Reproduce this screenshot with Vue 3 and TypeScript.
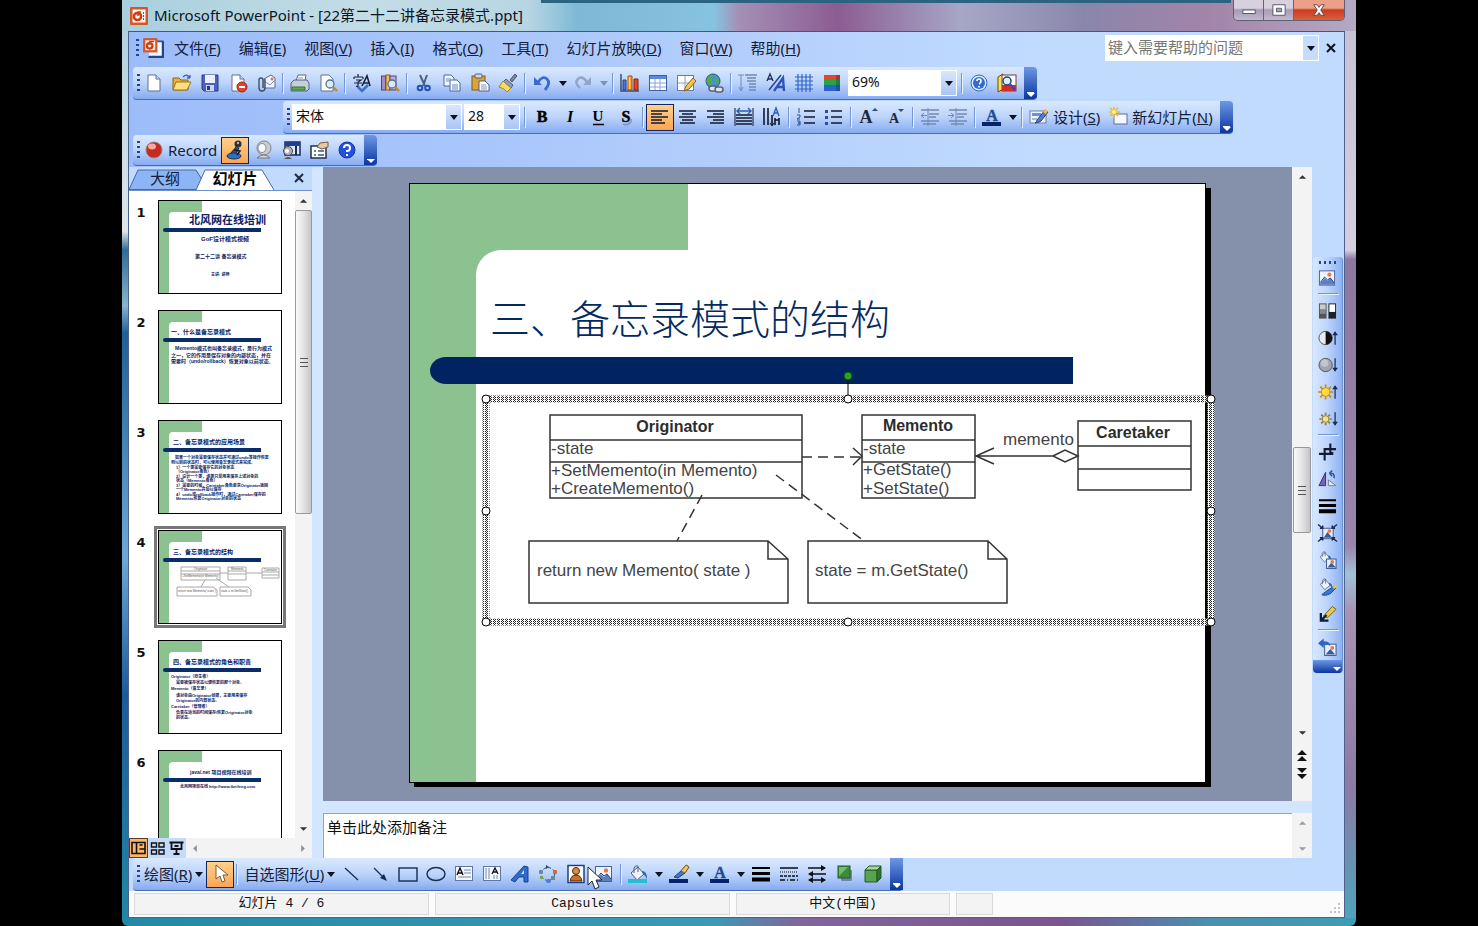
<script setup lang="ts">
import { h, ref, type FunctionalComponent } from 'vue'

type Tool =
  | { kind: 'button'; icon?: string; label: string; text?: string; key?: string; active?: boolean; pointer?: boolean; wide?: boolean; menu?: boolean }
  | { kind: 'menu'; label: string; muted?: boolean }
  | { kind: 'sep' }
  | { kind: 'combo'; label: string; value: string; size: string }

const AR = (x: number, y: number, up: boolean) =>
  `<path d="M${x} ${y}V${y + 13}" stroke="#182c50" stroke-width="1.3"/><path d="${up ? `M${x - 3} ${y + 3}L${x} ${y - 1}L${x + 3} ${y + 3}` : `M${x - 3} ${y + 10}L${x} ${y + 14}L${x + 3} ${y + 10}`}z" fill="#182c50"/>`
const PIC = '<rect x="1.5" y="2.5" width="16" height="15" fill="#eef4ff" stroke="#44639e"/><path d="M2 16l5-6 3 3 3-3 4 5v2H2z" fill="#5b7fc0"/><path d="M2 15l5-6 3 3 3-2 4 5" fill="none" stroke="#23407c"/><circle cx="12" cy="6.5" r="2.2" fill="#ee7a42"/>'
const PAGE = '<path d="M4 2h8l4 4v12H4z" fill="#fff" stroke="#5d7196"/><path d="M12 2v4h4" fill="#cfdcf2" stroke="#5d7196"/>'
const LENS = '<circle cx="12" cy="11" r="4" fill="#d6edff" stroke="#5c6f8a" stroke-width="1.3"/><path d="M15 14l4 4" stroke="#c68a1a" stroke-width="2.4"/>'
const rows = (a: number[][], c = '#10182c', w = 1.6) => a.map(([x1, x2, y]) => `<path d="M${x1} ${y}H${x2}" stroke="${c}" stroke-width="${w}"/>`).join('')
const rays = (r1: number, r2: number, c: string) =>
  Array.from({ length: 8 }, (_, i) => {
    const a = (i * Math.PI) / 4
    return `<path d="M${8 + r1 * Math.cos(a)} ${10 + r1 * Math.sin(a)}L${8 + r2 * Math.cos(a)} ${10 + r2 * Math.sin(a)}" stroke="${c}" stroke-width="1.8"/>`
  }).join('')
const BUCKET = '<path d="M3 9l7-6 6 7-7 6z" fill="#eef2fa" stroke="#50617f"/><path d="M6 9V4q1-3 4-2v6" fill="none" stroke="#50617f"/><path d="M14 7q5 0 5 8-2-4-4-5z" fill="#2e62b4"/>'

const icons: Record<string, string> = {
  ppt: '<rect x="1" y="1" width="18" height="18" rx="1" fill="#d4572a"/><rect x="3.5" y="3.5" width="13" height="13" fill="#fff4ec"/><circle cx="8.5" cy="10.5" r="3.6" fill="none" stroke="#cc3d16" stroke-width="2.5"/><path d="M9 10V6h3" stroke="#cc3d16" stroke-width="1.5" fill="none"/><path d="M14.5 6v9" stroke="#cc3d16" stroke-dasharray="2 1"/>',
  doc: '<path d="M8 4h11v14H6" fill="#f5f9ff" stroke="#315b9b" stroke-width="1.5"/><path d="M19 4v14H6" stroke="#234684" stroke-width="2" fill="none"/><rect x="1" y="1" width="13" height="13" fill="#d4572a"/><rect x="3" y="3" width="9" height="9" fill="#ffe9da"/><circle cx="7" cy="8" r="2.5" fill="none" stroke="#cc3d16" stroke-width="2"/><path d="M7 7V4h4" stroke="#cc3d16" fill="none"/>',
  new: PAGE,
  open: '<path d="M1 5h6l2 2h7v10H1z" fill="#e7b13c" stroke="#8d6915"/><path d="M4 9h15l-4 8H1z" fill="#ffdf82" stroke="#9a741c"/><path d="M11 4q4-4 7 1m0 0V2m0 3h-3" fill="none" stroke="#3e65a7" stroke-width="1.3"/>',
  save: '<path d="M2 2h16v16H4l-2-2z" fill="#4e5fc2" stroke="#2a3884"/><rect x="5" y="2" width="10" height="8" fill="#e9effc"/><rect x="6" y="12" width="8" height="6" fill="#cdd4ee"/><rect x="7" y="13" width="3" height="4" fill="#2a3884"/>',
  perm: PAGE + '<circle cx="14" cy="14" r="5" fill="#de452b" stroke="#a4240f"/><path d="M11 14h6" stroke="#fff" stroke-width="2"/>',
  mail: '<path d="M8 6l7-4 4 3v10H8z" fill="#f0f5ff" stroke="#576c97"/><path d="M8 8l6 4 5-5" fill="none" stroke="#7d91bb"/><circle cx="16" cy="6" r="1.5" fill="#e0774f"/><path d="M9 6v9q0 3-3 3t-3-3V7q0-2 2-2t2 2v8" fill="none" stroke="#444f66" stroke-width="1.4"/>',
  print: '<path d="M6 8l2-6h8l-1 6z" fill="#fff" stroke="#596b8d"/><path d="M1 10l3-3h13l2 3v6l-2 2H1z" fill="#c4cedd" stroke="#53627d"/><path d="M2 14h13v3H2z" fill="#5fae50" stroke="#357931"/><path d="M8 5h5" stroke="#8899b7"/>',
  preview: '<path d="M3 2h8l4 4v12H3z" fill="#fff" stroke="#5d7196"/>' + LENS,
  spell: '<path d="M2 4h9M6 1v3M2 4v2m9-2v2M4 7h5l-3 2v5l-2-1M2 10h8" fill="none" stroke="#17233c" stroke-width="1.2"/><path d="M10 13l5-10 3 10M12 10h5" fill="none" stroke="#17233c" stroke-width="1.6"/><path d="M6 14l4 4 6-6" fill="none" stroke="#3273d2" stroke-width="2.6"/>',
  research: '<rect x="1.5" y="3" width="4" height="14" fill="#a58bc8" stroke="#594176"/><rect x="6" y="2" width="4" height="15" fill="#edc15b" stroke="#8b6418"/><rect x="10" y="3" width="6" height="14" fill="#b8b2da" stroke="#594176"/>' + LENS,
  cut: '<path d="M6 2l5 11M13 2L9 13" stroke="#4b6288" stroke-width="2"/><circle cx="6" cy="15" r="2.3" fill="none" stroke="#2450b6" stroke-width="2"/><circle cx="13.5" cy="15" r="2.3" fill="none" stroke="#2450b6" stroke-width="2"/>',
  copy: '<path d="M2 2h7l3 3v8H2z" fill="#f4f8ff" stroke="#4a66a2"/><path d="M8 7h7l3 3v8H8z" fill="#f4f8ff" stroke="#4a66a2"/><path d="M4 6h5M4 8h4m2 4h6m-6 2h6m-6 2h6" stroke="#688ac9"/>',
  paste: '<rect x="2" y="3" width="13" height="14" fill="#dca438" stroke="#84590e"/><rect x="5" y="1" width="7" height="4" rx="1" fill="#d1d8e2" stroke="#555f73"/><path d="M9 8h6l4 4v6H9z" fill="#fff" stroke="#4d5f86"/><path d="M11 12h5m-5 2h6m-6 2h6" stroke="#8195be"/>',
  painter: '<path d="M12 7l5-6 2 2-5 6z" fill="#7b86a5" stroke="#4b546c"/><path d="M8 6l7 6-2 3-8-6z" fill="#8e9cba" stroke="#54607e"/><path d="M5 8l8 7-4 4q-3-4-8-5z" fill="#f2dc65" stroke="#a4861b"/>',
  undo: '<path d="M6 9q5-7 9-3t-2 11" fill="none" stroke="#3a69cf" stroke-width="2.8"/><path d="M2 4v8h8z" fill="#3a69cf"/>',
  redo: '<path d="M14 9q-5-7-9-3t2 9" fill="none" stroke="#93a6c8" stroke-width="2.5"/><path d="M18 4v8h-8z" fill="#93a6c8"/>',
  chart: '<path d="M1 1v17h18" stroke="#3b4d70" fill="none" stroke-width="1.5"/><path d="M3 7h3v10H3z" fill="#5279d0" stroke="#203f88"/><path d="M8 3h4v14H8z" fill="#f29a35" stroke="#ad4712"/><path d="M14 6h4v11h-4z" fill="#d9482b" stroke="#862310"/><path d="M9.5 4v12" stroke="#ffe052" stroke-width="1.5"/>',
  table: '<rect x="1.5" y="2.5" width="17" height="15" fill="#fff" stroke="#3b60a8"/><path d="M2 3h16v3H2z" fill="#5f89d8"/><path d="M2 10h16M2 14h16M7 6v11m5-11v11" stroke="#8aa6d5"/>',
  tableDraw: '<rect x="1.5" y="2.5" width="16" height="15" fill="#fff" stroke="#6c7c99"/><path d="M2 10h15M9 3v14" stroke="#8aa0c4"/><path d="M8 18l2-5 7-8 3 3-7 8z" fill="#f4c44f" stroke="#8b601c"/>',
  link: '<circle cx="9" cy="8" r="7" fill="#4a8fdc" stroke="#245a7c"/><path d="M4 4q4-4 6 0l-3 2 2 3-3 4-4-5zM12 5l3 1v5l-3-2z" fill="#55a94b"/><rect x="5" y="13" width="8" height="5" rx="2.5" fill="#dfe4ec" stroke="#59647a" stroke-width="1.5"/><rect x="11" y="14" width="8" height="5" rx="2.5" fill="#dfe4ec" stroke="#59647a" stroke-width="1.5"/>',
  expand: rows([[7, 19, 2], [9, 18, 5], [9, 18, 8], [11, 18, 11], [11, 18, 14], [11, 18, 17]], '#7388b4', 1.3) + '<path d="M3 2v15M0 2h6M1 14l2 4 2-4" stroke="#7388b4" fill="none"/>',
  format: '<path d="M1 8l3-7 3 7M2 6h4" stroke="#1f3159" stroke-width="1.3" fill="none"/><path d="M3 17L15 2" stroke="#27448c" stroke-width="1.5"/><path d="M8 18l9-13 1 13M11 14h7" stroke="#2b54b4" stroke-width="2.4" fill="none"/>',
  grid: '<path d="M4 1v18M8 1v18M12 1v18M16 1v18M1 4h18M1 8h18M1 12h18M1 16h18" stroke="#2e63cc" stroke-width="1.2"/>',
  color: '<rect x="2" y="2" width="16" height="6" fill="#e04a2b"/><rect x="2" y="7" width="16" height="6" fill="#25a54a"/><rect x="2" y="12" width="16" height="6" fill="#2763cf"/><path d="M14 2h4v16h-4z" fill="#123" opacity=".3"/>',
  help: '<circle cx="10" cy="10" r="8" fill="#dceaff" stroke="#3869bd"/><circle cx="10" cy="10" r="6" fill="#316dce"/><path d="M8 8q0-2 2-2t2 2-2 3m0 2v1.5" fill="none" stroke="#fff" stroke-width="1.7"/>',
  helpDeep: '<circle cx="10" cy="10" r="8" fill="#2450e0" stroke="#18349d"/><path d="M7 8q0-3 3-3t3 3-3 3v1m0 2v2" fill="none" stroke="#fff" stroke-width="2"/>',
  lookup: '<path d="M1 4l5-3v15l-5 3z" fill="#ffe04a" stroke="#6a4c0d"/><rect x="5" y="2" width="14" height="16" fill="#fbfbff" stroke="#7f3f2d"/><path d="M5 12h14v6H5z" fill="#d92b20"/><circle cx="10" cy="8" r="4" fill="#d8f0ff" stroke="#26407c" stroke-width="1.5"/><path d="M13 11l5 6" stroke="#3d3fc0" stroke-width="2"/>',
  bold: '<text x="10" y="15" text-anchor="middle" font-family="Liberation Serif, serif" font-size="16" font-weight="700" fill="#000" stroke="#000" stroke-width=".5">B</text>',
  italic: '<text x="10" y="15" text-anchor="middle" font-family="Liberation Serif, serif" font-size="16" font-weight="700" font-style="italic" fill="#000">I</text>',
  under: '<text x="10" y="14" text-anchor="middle" font-family="Liberation Serif, serif" font-size="15" font-weight="700" fill="#000">U</text><path d="M5 17.5h11" stroke="#000" stroke-width="1.3"/>',
  shadow: '<path d="M7 17q5 2 8-2v-3" fill="none" stroke="#7b93bd" stroke-width="1.4"/><text x="10" y="15" text-anchor="middle" font-family="Liberation Serif, serif" font-size="16" font-weight="700" fill="#000" stroke="#000" stroke-width=".4">S</text>',
  left: rows([[1, 18, 4], [1, 12, 7], [1, 18, 10], [1, 12, 13], [1, 15, 16]]),
  center: rows([[1, 18, 4], [4, 15, 7], [1, 18, 10], [4, 15, 13], [2, 17, 16]]),
  right: rows([[1, 18, 4], [7, 18, 7], [1, 18, 10], [7, 18, 13], [4, 18, 16]]),
  distribute: rows([[2, 18, 8], [2, 18, 11], [2, 18, 14], [2, 18, 17]]) + '<path d="M1 1v18M19 1v18" stroke="#10182c"/><path d="M3 4h14M6 1L3 4l3 3M14 1l3 3-3 3" fill="none" stroke="#2f5cb6" stroke-width="1.4"/>',
  vertical: '<path d="M2 1v17M6 1v17M10 8v10M13 11v7M17 11v7M13 13h4" stroke="#10182c" stroke-width="1.6"/><path d="M11 9l3-8 3 8M12 6h4" stroke="#2f5cb6" stroke-width="1.4" fill="none"/><path d="M8 16l2 3 2-3" stroke="#10182c" fill="none"/>',
  numbers: rows([[8, 19, 4], [8, 19, 10], [8, 19, 16]]) + '<path d="M3 1v5M1 8h3v2l-3 2h3M1 14h3v2H2h2v2H1" stroke="#2b4f9c" fill="none"/>',
  bullets: rows([[7, 18, 4], [7, 18, 10], [7, 18, 16]]) + '<rect x="1" y="3" width="3" height="3" fill="#2b4f9c"/><rect x="1" y="9" width="3" height="3" fill="#2b4f9c"/><rect x="1" y="15" width="3" height="3" fill="#2b4f9c"/>',
  grow: '<text x="8" y="16" text-anchor="middle" font-family="Liberation Serif, serif" font-size="18" font-weight="700" fill="#1c2a3c">A</text><path d="M14 4l3-3 3 3z" fill="#274c96"/>',
  shrink: '<text x="8" y="16" text-anchor="middle" font-family="Liberation Serif, serif" font-size="14" font-weight="700" fill="#1c2a3c">A</text><path d="M12 2h6l-3 3z" fill="#274c96"/>',
  outdent: rows([[1, 19, 3], [9, 19, 7], [9, 16, 10], [1, 19, 14], [3, 16, 17]], '#7388b4', 1.4) + '<path d="M7 8.5H1M4 6L1 8.5 4 11M8 1v18" fill="none" stroke="#7388b4"/>',
  indent: rows([[1, 19, 3], [9, 19, 7], [9, 16, 10], [1, 19, 14], [3, 16, 17]], '#7388b4', 1.4) + '<path d="M0 8.5h6M3 6l3 2.5L3 11M8 1v18" fill="none" stroke="#7388b4"/>',
  fontColor: '<rect x="0" y="15" width="19" height="4" fill="#06246a"/><text x="10" y="14" text-anchor="middle" font-family="Liberation Serif, serif" font-size="16" font-weight="700" fill="#244a94" stroke="#244a94" stroke-width=".4">A</text>',
  design: '<rect x="1" y="4" width="16" height="12" fill="#eef4ff" stroke="#6b7ea6"/><path d="M3 6h9v3H3z" fill="#6b93dd"/><path d="M3 12h5" stroke="#6b7ea6"/><path d="M8 13l8-10 3 2-7 9q-3 2-6 2 2-1 2-3z" fill="#547cc8" stroke="#26427b"/><path d="M14 5l2-3 3 2-2 3z" fill="#f0bc43"/>',
  newSlide: '<rect x="6" y="7" width="13" height="10" fill="#f5f9ff" stroke="#5a6f9b"/><path d="M6 0v11M1 5h11M2 1l8 8M10 1L2 9" stroke="#f1b92c" stroke-width="1.6"/><circle cx="6" cy="5" r="2" fill="#fff3a0"/>',
  record: '<circle cx="10" cy="10" r="8" fill="#c52b22" stroke="#9c837d"/><ellipse cx="8" cy="6.5" rx="4" ry="3" fill="#f7a99b"/>',
  mic: '<circle cx="13" cy="4" r="3.5" fill="#2a2f38"/><path d="M12 6L5 14l5 1 4-7" fill="#39506c" stroke="#111a2a"/><ellipse cx="9" cy="16" rx="7" ry="3" fill="#2e6fc4" stroke="#123462"/><path d="M9 10l6 1-3 4" stroke="#111a2a" fill="none" stroke-width="1.5"/><circle cx="13" cy="3" r="1.2" fill="#aeb9c8"/>',
  webcam: '<circle cx="11" cy="8" r="7" fill="#c9cdd0" stroke="#7e8387"/><ellipse cx="9" cy="8" rx="4" ry="4.5" fill="#f7f8f9" stroke="#888d91"/><path d="M4 18q7-6 13 0z" fill="#d9dcde" stroke="#777"/>',
  screen: '<rect x="4" y="2" width="15" height="13" fill="#dce9fb" stroke="#152a58" stroke-width="1.5"/><rect x="4" y="2" width="15" height="4" fill="#1e3f92"/><path d="M15 6v9" stroke="#152a58" stroke-width="2"/><circle cx="7" cy="11" r="4.5" fill="#aeb2b6" stroke="#444"/><circle cx="6" cy="11" r="2" fill="#fff"/><path d="M3 19q4-4 8 0z" fill="#555"/>',
  options: '<rect x="2" y="6" width="15" height="12" fill="#fff" stroke="#20304e" stroke-width="1.5"/><path d="M5 11h2m2 0h6M5 15h2m2 0h6" stroke="#31588f" stroke-width="1.5"/><path d="M8 7l3-4 8-1v5l-6 2z" fill="#e9c6a2" stroke="#7a583a"/>',
  pointer: '<path d="M6 1v14l4-3 2 6 3-1-2-6h5z" fill="#fff" stroke="#7a5a35"/>',
  line: '<path d="M3 4l13 12" stroke="#182c50" stroke-width="1.3"/>',
  arrow: '<path d="M4 4l11 11" stroke="#182c50" stroke-width="1.3"/><path d="M17 17l-7-3 4-4z" fill="#182c50"/>',
  rect: '<rect x="1" y="4" width="18" height="13" fill="none" stroke="#182c50" stroke-width="1.4"/>',
  oval: '<ellipse cx="10" cy="10" rx="9" ry="6.5" fill="none" stroke="#182c50" stroke-width="1.4"/>',
  textBox: '<rect x="1.5" y="2.5" width="17" height="14" fill="#f4f8ff" stroke="#62779f"/><path d="M3 11l3-7 3 7M4 9h4" stroke="#111" fill="none" stroke-width="1.4"/><path d="M10 6h7m-7 3h7M4 13h13" stroke="#7488ae"/>',
  textBoxV: '<rect x="1.5" y="2.5" width="17" height="14" fill="#f4f8ff" stroke="#62779f"/><path d="M10 10l3-6 3 6M11 8h4" stroke="#111" fill="none" stroke-width="1.3"/><path d="M4 4v11m3-11v11m5-4v4m3-4v4" stroke="#7488ae"/>',
  wordArt: '<path d="M1 16L14 2l4 1v15h-4v-5H9l-4 5z" fill="#2f6bcb" stroke="#184493"/><path d="M11 10l3-4v4z" fill="#cfe0fb"/>',
  diagram: '<circle cx="10" cy="10" r="6.5" fill="none" stroke="#31456b" stroke-dasharray="3 2"/><rect x="1" y="6" width="4" height="4" rx="1" fill="#6a86b8"/><rect x="15" y="6" width="4" height="4" rx="1" fill="#c06f4a"/><rect x="8" y="15" width="5" height="4" rx="2" fill="#4d7ed8"/><rect x="2" y="12" width="3" height="3" fill="#7aa551"/><rect x="13" y="12" width="4" height="4" fill="#75839c"/><path d="M8 1l3 2-3 2z" fill="#31456b"/>',
  clip: '<rect x="2" y="1.5" width="16" height="17" fill="#fff" stroke="#203e7c" stroke-width="1.5"/><circle cx="10" cy="7" r="3.5" fill="#e0893e" stroke="#4b2b10"/><path d="M4 17q1-6 6-6t6 6z" fill="#ce6d24" stroke="#4b2b10"/>',
  picture: PIC,
  fill: BUCKET + '<rect x="0" y="15" width="19" height="4" fill="#25bfd0"/>',
  pen: '<path d="M5 13l7-6 5-6 3 2-4 6-7 5z" fill="#4b72bd" stroke="#243f78"/><path d="M12 7l5-6 3 2-4 6z" fill="#efc663" stroke="#8c6a20"/><rect x="0" y="15" width="19" height="4" fill="#06246a"/>',
  weight: '<path d="M1 4h18" stroke="#000" stroke-width="2"/><path d="M1 9.5h18" stroke="#000" stroke-width="3"/><path d="M1 15.5h18" stroke="#000" stroke-width="4"/>',
  dash: rows([[1, 19, 4]]) + '<path d="M1 8h18" stroke="#111" stroke-dasharray="1 1"/><path d="M1 12h18" stroke="#111" stroke-width="1.5" stroke-dasharray="3 1"/><path d="M1 16h18" stroke="#111" stroke-width="1.5" stroke-dasharray="5 2 1 2"/>',
  arrows: '<path d="M1 4h17M2 10h17M2 16h16" stroke="#111" stroke-width="1.5"/><path d="M14 1l5 3-5 3zM6 7l-5 3 5 3zM6 13l-5 3 5 3zM14 13l5 3-5 3z" fill="#111"/>',
  shade: '<rect x="6" y="6" width="11" height="11" rx="1" fill="#7088a8"/><rect x="3" y="2" width="12" height="12" fill="#3f8b3c" stroke="#225a22"/><path d="M4 3h9L4 12z" fill="#77bb6d"/>',
  cube: '<path d="M2 6h12v12H2z" fill="#58a352" stroke="#225a22"/><path d="M2 6l4-4h12l-4 4z" fill="#a9d89f" stroke="#225a22"/><path d="M14 6l4-4v12l-4 4z" fill="#2f7030" stroke="#225a22"/>',
  gray: '<rect x="1" y="2" width="8" height="16" fill="#555"/><rect x="2" y="3" width="6" height="6" fill="#ccc"/><rect x="2" y="8" width="6" height="5" fill="#888"/><rect x="11" y="2" width="8" height="16" fill="#222"/><rect x="12" y="3" width="6" height="8" fill="#fff"/>',
  contrastUp: '<circle cx="8" cy="10" r="7" fill="#e8ecf2" stroke="#555"/><path d="M8 3a7 7 0 0 1 0 14z" fill="#111"/>' + AR(18, 4, true),
  contrastDown: '<circle cx="8" cy="10" r="7" fill="#9fa6ae" stroke="#555"/><circle cx="7" cy="8" r="4" fill="#c0c6cc"/>' + AR(18, 3, false),
  brightUp: rays(4, 8, '#cf8a12') + '<circle cx="8" cy="10" r="4.5" fill="#ffdc3c" stroke="#c98a17"/>' + AR(18, 4, true),
  brightDown: rays(4, 6.5, '#8e7c3c') + '<circle cx="8" cy="10" r="3.5" fill="#f6e08b" stroke="#8e7c3c"/>' + AR(18, 3, false),
  crop: '<path d="M1 12h12V1M7 19V7h12M10 12h5v-2" fill="none" stroke="#111c33" stroke-width="2.2"/>',
  rotate: '<path d="M8 3v14H1z" fill="#7661b5" stroke="#3c2f75"/><path d="M11 17v-6l8 6z" fill="#dfe6f2" stroke="#75829b"/><path d="M12 4q6-1 5 5M12 4l3-3m-3 3l3 3" fill="none" stroke="#244d9c" stroke-width="1.5"/>',
  compress: '<rect x="5" y="5" width="11" height="11" fill="#e7eefc" stroke="#3c5791"/><path d="M6 15l4-6 5 6z" fill="#385b9c"/><circle cx="12" cy="8" r="2" fill="#e57c49"/><path d="M0 1l5 4M20 1l-5 4M0 19l5-4M20 19l-5-4M5 2v3H2M15 2v3h3M5 18v-3H2M15 18v-3h3" stroke="#152b56" stroke-width="1.5" fill="none"/>',
  recolor: '<g transform="scale(.75)">' + BUCKET + '</g><rect x="9" y="9" width="10" height="10" fill="#e7eefc" stroke="#3c5791"/><path d="M10 18l4-5 5 5z" fill="#385b9c"/><circle cx="15" cy="12" r="2" fill="#e57c49"/>',
  formatPic: '<g transform="scale(.8)">' + BUCKET + '</g><path d="M8 15l9-6 2 2-6 6q-6 3-9 1z" fill="#3777cf" stroke="#234a8c"/><path d="M15 10l4-3 1 3-3 2z" fill="#efc34a"/>',
  transparent: '<path d="M6 12l9-10 4 3-9 9z" fill="#e8ca44" stroke="#6f5b18"/><path d="M3 9v8h8M3 17l6-6" fill="none" stroke="#111c33" stroke-width="2.4"/>',
  reset: '<rect x="7" y="7" width="12" height="12" fill="#e7eefc" stroke="#3c5791"/><path d="M8 18l5-6 5 6z" fill="#385b9c"/><circle cx="15" cy="11" r="2" fill="#e57c49"/><path d="M0 6l6-5v3q7 0 7 5-3-2-7-1v3z" fill="#2f66bf"/>',
  tri: '<path d="M6 8h8l-4 5z" fill="#0b1220"/>',
  triMuted: '<path d="M6 8h8l-4 5z" fill="#7d93bd"/>',
}

const svg = (name: string) => h('svg', { class: 'glyph', viewBox: '0 0 20 20', 'aria-hidden': 'true', innerHTML: icons[name] })

const caption = (text: string, key?: string) => h('span', { class: 'cap' }, key ? [text + '(', h('u', key), ')'] : text)

const ToolItems: FunctionalComponent<{ items: Tool[] }> = (props) =>
  props.items.map((t) => {
    if (t.kind === 'sep') return h('span', { class: 'sep' })
    if (t.kind === 'menu') return h('button', { class: 'tool drop', type: 'button', 'aria-label': t.label }, [svg(t.muted ? 'triMuted' : 'tri')])
    if (t.kind === 'combo')
      return h('span', { class: ['combo', t.size] }, [
        h('select', { 'aria-label': t.label }, [h('option', t.value)]),
        h('span', { class: 'combo-arrow' }, [svg('tri')]),
      ])
    return h('button', { class: ['tool', { on: t.active, labelled: t.text }], type: 'button', 'aria-label': t.label }, [
      t.icon ? svg(t.icon) : null,
      t.text ? caption(t.text, t.key) : null,
      t.menu ? svg('tri') : null,
      t.pointer
        ? h('svg', { class: 'mouse', viewBox: '0 0 16 24', 'aria-hidden': 'true', innerHTML: '<path d="M1 1v18l4-4 3 8 4-2-3-7h6z" fill="#fff" stroke="#1c2433"/>' })
        : null,
    ])
  })
ToolItems.props = ['items']

const b = (icon: string, label: string, extra: object = {}): Tool => ({ kind: 'button', icon, label, ...extra })
const s: Tool = { kind: 'sep' }
const m = (label: string, muted = false): Tool => ({ kind: 'menu', label, muted })

const standard: Tool[] = [
  b('new', '新建'), b('open', '打开'), b('save', '保存'), b('perm', '权限'), b('mail', '电子邮件'), s,
  b('print', '打印'), b('preview', '打印预览'), s, b('spell', '拼写检查'), b('research', '信息检索'), s,
  b('cut', '剪切'), b('copy', '复制'), b('paste', '粘贴'), b('painter', '格式刷'), s,
  b('undo', '撤消'), m('撤消列表'), b('redo', '恢复'), m('恢复列表', true), s,
  b('chart', '插入图表'), b('table', '插入表格'), b('tableDraw', '表格和边框'), b('link', '插入超链接'), s,
  b('expand', '全部展开'), b('format', '显示格式'), b('grid', '显示网格'), b('color', '颜色/灰度'),
  { kind: 'combo', label: '显示比例', value: '69%', size: 'zoom' }, s,
  b('help', '帮助'), b('lookup', '查找'),
]
const formatting: Tool[] = [
  { kind: 'combo', label: '字体', value: '宋体', size: 'font' },
  { kind: 'combo', label: '字号', value: '28', size: 'points' }, s,
  b('bold', '加粗'), b('italic', '倾斜'), b('under', '下划线'), b('shadow', '阴影'), s,
  b('left', '左对齐', { active: true }), b('center', '居中'), b('right', '右对齐'), b('distribute', '分散对齐'), b('vertical', '更改文字方向'), s,
  b('numbers', '编号'), b('bullets', '项目符号'), s, b('grow', '增大字号'), b('shrink', '减小字号'), s,
  b('outdent', '减少缩进量'), b('indent', '增加缩进量'), s, b('fontColor', '字体颜色'), m('字体颜色列表'), s,
  b('design', '设计', { text: '设计', key: 'S' }), b('newSlide', '新幻灯片', { text: '新幻灯片', key: 'N' }),
]
const recording: Tool[] = [
  b('record', 'Record', { text: 'Record' }), b('mic', '麦克风', { active: true }), b('webcam', '摄像头'),
  b('screen', '屏幕'), b('options', '选项'), b('helpDeep', '帮助'),
]
const drawing: Tool[] = [
  { kind: 'button', label: '绘图', text: '绘图', key: 'R', menu: true }, b('pointer', '选择对象', { active: true }), s,
  { kind: 'button', label: '自选图形', text: '自选图形', key: 'U', menu: true },
  b('line', '直线'), b('arrow', '箭头'), b('rect', '矩形'), b('oval', '椭圆'), b('textBox', '文本框'), b('textBoxV', '竖排文本框'),
  b('wordArt', '艺术字'), b('diagram', '组织结构图'), b('clip', '剪贴画', { pointer: true }), b('picture', '插入图片'), s,
  b('fill', '填充颜色'), m('填充颜色列表'), b('pen', '线条颜色'), m('线条颜色列表'), b('fontColor', '字体颜色'), m('字体颜色列表'),
  b('weight', '线型'), b('dash', '虚线线型'), b('arrows', '箭头样式'), b('shade', '阴影样式'), b('cube', '三维效果样式'),
]
const pictureTools: Tool[] = [
  b('picture', '插入图片'), s, b('gray', '颜色'), b('contrastUp', '增加对比度'), b('contrastDown', '降低对比度'),
  b('brightUp', '增加亮度'), b('brightDown', '降低亮度'), s, b('crop', '裁剪'), b('rotate', '向左旋转'), b('weight', '线型'),
  b('compress', '压缩图片'), b('recolor', '图片重新着色'), b('formatPic', '设置图片格式'), b('transparent', '设置透明色'), s, b('reset', '重设图片'),
]

const menus: [string, string][] = [
  ['文件', 'F'], ['编辑', 'E'], ['视图', 'V'], ['插入', 'I'], ['格式', 'O'], ['工具', 'T'], ['幻灯片放映', 'D'], ['窗口', 'W'], ['帮助', 'H'],
]

interface Line { x: number; y: number; size: number; text: string; bold?: boolean }
const thumbs: { title: Line; body: Line[] }[] = [
  {
    title: { x: 31, y: 24, size: 11, text: '北风网在线培训' },
    body: [
      { x: 43, y: 41, size: 6, text: 'GoF设计模式视频' },
      { x: 37, y: 58, size: 5, text: '第二十二讲 备忘录模式' },
      { x: 53, y: 76, size: 4, text: '主讲: 讲师' },
    ],
  },
  {
    title: { x: 13, y: 24, size: 6, text: '一、什么是备忘录模式' },
    body: [
      { x: 17, y: 40, size: 5, text: 'Memento模式也叫备忘录模式，是行为模式' },
      { x: 13, y: 47, size: 5, text: '之一，它的作用是保存对象的内部状态，并在' },
      { x: 13, y: 53, size: 5, text: '需要时（undo/rollback）恢复对象以前状态。' },
    ],
  },
  {
    title: { x: 15, y: 24, size: 6, text: '二、备忘录模式的应用场景' },
    body: [
      { x: 17, y: 39, size: 4, text: '如果一个对象需要保存状态并可通过undo等操作恢复' },
      { x: 13, y: 44, size: 4, text: '到以前的状态时，可以使用备忘录模式来完成。' },
      { x: 18, y: 49, size: 4, text: '1）一个类需要保存它的对象状态' },
      { x: 18, y: 53, size: 4, text: '（Originator角色）' },
      { x: 18, y: 58, size: 4, text: '2）设计一个类，该类只是用来保存上述对象的' },
      { x: 18, y: 62, size: 4, text: '状态（Memento角色）' },
      { x: 18, y: 67, size: 4, text: '3）需要的时候，Caretaker角色要求Originator返回' },
      { x: 18, y: 71, size: 4, text: '一个Memento并加以保存' },
      { x: 18, y: 76, size: 4, text: '4）undo或rollback操作时，通过Caretaker保存的' },
      { x: 18, y: 80, size: 4, text: 'Memento恢复Originator对象的状态' },
    ],
  },
  { title: { x: 15, y: 24, size: 6, text: '三、备忘录模式的结构' }, body: [] },
  {
    title: { x: 15, y: 24, size: 6, text: '四、备忘录模式的角色和职责' },
    body: [
      { x: 13, y: 38, size: 4, text: 'Originator（原生者）' },
      { x: 18, y: 44, size: 4, text: '需要被保存状态以便恢复的那个对象。' },
      { x: 13, y: 50, size: 4, text: 'Memento（备忘录）' },
      { x: 18, y: 57, size: 4, text: '该对象由Originator创建，主要用来保存' },
      { x: 18, y: 62, size: 4, text: 'Originator的内部状态。' },
      { x: 13, y: 68, size: 4, text: 'Caretaker（管理者）' },
      { x: 18, y: 74, size: 4, text: '负责在适当的时间保存/恢复Originator对象' },
      { x: 18, y: 79, size: 4, text: '的状态。' },
    ],
  },
  {
    title: { x: 32, y: 24, size: 5, text: 'java/.net 项目视频在线培训' },
    body: [{ x: 22, y: 38, size: 4, text: '北风网项目在线 http://www.ibeifeng.com' }],
  },
]
const current = ref(3)
const handles = [[77, 216], [439, 216], [802, 216], [77, 328], [802, 328], [77, 439], [439, 439], [802, 439]]
</script>

<template>
  <main class="window">
    <header class="titlebar">
      <svg class="glyph" viewBox="0 0 20 20" aria-hidden="true" v-html="icons.ppt"></svg>
      <h1>Microsoft PowerPoint - [22第二十二讲备忘录模式.ppt]</h1>
      <div class="caption-buttons">
        <button type="button" aria-label="最小化"><svg viewBox="0 0 20 16"><rect x="3" y="8" width="14" height="4" fill="#fff" stroke="#444a5c" /></svg></button>
        <button type="button" aria-label="还原"><svg viewBox="0 0 20 16"><path d="M3 2h14v12H3zM7 6v4h6V6z" fill="#fff" fill-rule="evenodd" stroke="#444a5c" /></svg></button>
        <button type="button" class="close" aria-label="关闭"><svg viewBox="0 0 20 16"><path d="M4 2h4l2 3 2-3h4l-4 6 4 6h-4l-2-3-2 3H4l4-6z" fill="#fff" stroke="#5c3a3a" /></svg></button>
      </div>
    </header>

    <div class="client">
      <nav class="menubar" aria-label="菜单栏">
        <span class="grip"></span>
        <svg class="glyph doc" viewBox="0 0 20 20" aria-hidden="true" v-html="icons.doc"></svg>
        <button v-for="[name, key] in menus" :key="key" type="button">{{ name }}(<u>{{ key }}</u>)</button>
        <div class="ask">
          <input type="text" placeholder="键入需要帮助的问题" aria-label="键入需要帮助的问题" />
          <button type="button" aria-label="最近的问题"><svg class="glyph" viewBox="0 0 20 20" v-html="icons.tri"></svg></button>
        </div>
        <button type="button" class="x" aria-label="关闭窗口"><svg viewBox="0 0 12 12"><path d="M2 2l8 8M10 2l-8 8" stroke="#0b1220" stroke-width="2" /></svg></button>
      </nav>

      <div class="bar" role="toolbar" aria-label="常用">
        <span class="grip"></span><ToolItems :items="standard" /><button type="button" class="more" aria-label="工具栏选项"></button>
      </div>
      <div class="bar second" role="toolbar" aria-label="格式">
        <span class="grip"></span><ToolItems :items="formatting" /><button type="button" class="more" aria-label="工具栏选项"></button>
      </div>
      <div class="bar third" role="toolbar" aria-label="录制">
        <span class="grip"></span><ToolItems :items="recording" /><button type="button" class="more" aria-label="工具栏选项"></button>
      </div>

      <div class="workspace">
        <aside class="outline">
          <div class="tabs" role="tablist">
            <button type="button" role="tab" class="tab">
              <svg viewBox="0 0 72 21" preserveAspectRatio="none"><path d="M0 20.500L9 1H67L72 9V20.500z" fill="#8db4f5" stroke="#4a68a8" /></svg><span>大纲</span>
            </button>
            <button type="button" role="tab" class="tab chosen" aria-selected="true">
              <svg viewBox="0 0 78 21" preserveAspectRatio="none"><path d="M0 21L9 1H66L78 21z" fill="#fff" /><path d="M0 21L9 1H66L78 21" fill="none" stroke="#4a68a8" /></svg><span>幻灯片</span>
            </button>
            <button type="button" class="x" aria-label="关闭"><svg viewBox="0 0 12 12"><path d="M2 2l8 8M10 2l-8 8" stroke="#1d2a42" stroke-width="2" /></svg></button>
          </div>
          <div class="thumb-area">
            <ol class="thumbs">
              <li v-for="(t, i) in thumbs" :key="i" :class="{ current: i === current }">
                <span class="num">{{ i + 1 }}</span>
                <button type="button" :aria-label="`幻灯片 ${i + 1}`" @click="current = i">
                  <svg viewBox="0 0 124 94">
                    <rect x=".5" y=".5" width="123" height="93" fill="#fff" stroke="#000" />
                    <path d="M1 1H44V12H15A4 4 0 0 0 11 16V93H1Z" fill="#8cc28f" />
                    <path d="M7 28H103V32H7A2 2 0 0 1 7 28Z" fill="#0a2c68" />
                    <text :x="t.title.x" :y="t.title.y" :font-size="t.title.size">{{ t.title.text }}</text>
                    <text v-for="(l, j) in t.body" :key="j" :x="l.x" :y="l.y" :font-size="l.size">{{ l.text }}</text>
                    <g v-if="i === 3" class="mini">
                      <path d="M23 37h39v13H23zM23 41h39M23 44h39M70 37h18v13H70zM70 41h18M70 44h18M104 38h17v10h-17zM104 42h17M104 45h17M62 43h8M88 43h16M19 57h36l4 3v6H19zM62 57h28l3 3v6H62zM47 50l-4 7M58 48l13 9" />
                      <text x="36" y="40">Originator</text><text x="24" y="47">+SetMemento(in Memento)</text><text x="73" y="40">Memento</text>
                      <text x="106" y="41">Caretaker</text><text x="20" y="62">return new Memento( state )</text><text x="63" y="62">state = m.GetState()</text>
                    </g>
                  </svg>
                </button>
              </li>
            </ol>
            <div class="vscroll small">
              <button type="button" aria-label="向上滚动"><svg viewBox="0 0 10 6"><path d="M1 5l4-4 4 4z" fill="#333" /></svg></button>
              <span class="handle"></span>
              <button type="button" aria-label="向下滚动"><svg viewBox="0 0 10 6"><path d="M1 1l4 4 4-4z" fill="#333" /></svg></button>
            </div>
          </div>
          <div class="views">
            <button type="button" class="on" aria-label="普通视图"><svg viewBox="0 0 16 16"><path d="M1.500 2.500h13v11h-13zM6 3v10M9 9h5M9 5h3" fill="none" stroke="#111" stroke-width="1.600" /></svg></button>
            <button type="button" aria-label="幻灯片浏览视图"><svg viewBox="0 0 16 16"><path d="M2 3h5v4H2zM9.500 3h5v4h-5zM2 10h5v4H2zM9.500 10h5v4h-5z" fill="none" stroke="#111" stroke-width="1.400" /></svg></button>
            <button type="button" aria-label="幻灯片放映"><svg viewBox="0 0 16 16"><path d="M1 2.500h14M3 3v6h10V3M8 9v4M5 14h6M6 6h4" fill="none" stroke="#111" stroke-width="1.800" /></svg></button>
            <div class="hscroll">
              <button type="button" aria-label="向左滚动"><svg viewBox="0 0 6 10"><path d="M5 1L1 5l4 4z" fill="#8d9096" /></svg></button>
              <button type="button" aria-label="向右滚动"><svg viewBox="0 0 6 10"><path d="M1 1l4 4-4 4z" fill="#8d9096" /></svg></button>
            </div>
          </div>
        </aside>

        <section class="editor">
          <div class="stage-row">
            <div class="stage">
              <svg class="slide" viewBox="0 0 797 600" role="img" aria-label="三、备忘录模式的结构">
                <defs>
                  <pattern id="stipple" width="4" height="2" patternUnits="userSpaceOnUse">
                    <rect width="4" height="2" fill="#fff" /><rect width="1" height="1" x="0" fill="#222" /><rect width="1" height="1" x="2" fill="#222" /><rect width="1" height="1" x="1" y="1" fill="#333" />
                  </pattern>
                </defs>
                <rect x="5" y="5" width="797" height="599" fill="#000" />
                <rect x=".5" y=".5" width="796" height="599" fill="#fff" stroke="#000" />
                <path d="M1 1H279V67H92A25 25 0 0 0 67 92V599H1Z" fill="#8cc28f" />
                <path d="M37 174H664V201H37A16 13.500 0 0 1 37 174Z" fill="#002362" />
                <text class="slide-title" x="81" y="151">三、备忘录模式的结构</text>

                <rect x="77" y="216" width="725" height="223" fill="none" stroke="url(#stipple)" stroke-width="7" />
                <g class="uml">
                  <path d="M141 232h252v83H141zM141 257h252M141 279h252M453 232h113v83H453zM453 257h113M453 279h113M669 238h113v69H669zM669 263h113M669 286h113" />
                  <path d="M120 358h239l20 18v44H120zM359 358v18h20M399 358h180l19 18v44H399zM579 358v18h19" />
                  <path d="M444 265l9 8-9 9M585 265l-18 8 18 8M567 273h77M644 273l12-6 13 6-13 6z" />
                  <path d="M393 274h60M293 312l-25 46M367 292l88 66" stroke-dasharray="10 6" />
                  <g class="name">
                    <text x="266" y="249">Originator</text><text x="509" y="248">Memento</text><text x="724" y="255">Caretaker</text>
                  </g>
                  <text x="142" y="271">-state</text><text x="142" y="293">+SetMemento(in Memento)</text><text x="142" y="311">+CreateMemento()</text>
                  <text x="454" y="271">-state</text><text x="454" y="292">+GetState()</text><text x="454" y="311">+SetState()</text>
                  <text x="594" y="262">memento</text>
                  <text x="128" y="393">return new Memento( state )</text><text x="406" y="393">state = m.GetState()</text>
                </g>
                <path d="M439 194V212" stroke="#000" />
                <circle cx="439" cy="193" r="4" fill="#27a31e" stroke="#0b4a08" />
                <circle v-for="([x, y], i) in handles" :key="i" :cx="x" :cy="y" r="4" fill="#fff" stroke="#000" />
              </svg>
            </div>
            <div class="vscroll">
              <button type="button" aria-label="向上滚动"><svg viewBox="0 0 10 6"><path d="M1 5l4-4 4 4z" fill="#333" /></svg></button>
              <span class="handle"></span>
              <button type="button" class="down" aria-label="向下滚动"><svg viewBox="0 0 10 6"><path d="M1 1l4 4 4-4z" fill="#333" /></svg></button>
              <button type="button" class="page" aria-label="上一张幻灯片"><svg viewBox="0 0 12 12"><path d="M1 6l5-5 5 5zM1 12l5-5 5 5z" fill="#111" /></svg></button>
              <button type="button" class="page" aria-label="下一张幻灯片"><svg viewBox="0 0 12 12"><path d="M1 0l5 5 5-5zM1 6l5 5 5-5z" fill="#111" /></svg></button>
            </div>
          </div>
          <div class="notes">
            <textarea aria-label="备注" placeholder="单击此处添加备注"></textarea>
            <div class="vscroll idle">
              <button type="button" aria-label="向上滚动"><svg viewBox="0 0 10 6"><path d="M1 5l4-4 4 4z" fill="#9a9da3" /></svg></button>
              <button type="button" aria-label="向下滚动"><svg viewBox="0 0 10 6"><path d="M1 1l4 4 4-4z" fill="#9a9da3" /></svg></button>
            </div>
          </div>
        </section>

        <div class="dock">
          <div class="bar upright" role="toolbar" aria-label="图片">
            <span class="grip"></span><ToolItems :items="pictureTools" /><button type="button" class="more" aria-label="工具栏选项"></button>
          </div>
        </div>
      </div>

      <div class="bar-row">
        <div class="bar" role="toolbar" aria-label="绘图">
          <span class="grip"></span><ToolItems :items="drawing" /><button type="button" class="more" aria-label="工具栏选项"></button>
        </div>
      </div>

      <footer class="status">
        <span>幻灯片 4 / 6</span><span>Capsules</span><span>中文(中国)</span><span></span>
        <svg viewBox="0 0 12 12" aria-hidden="true"><path d="M9 1h2v2H9zM5 5h2v2H5zM9 5h2v2H9zM1 9h2v2H1zM5 9h2v2H5zM9 9h2v2H9z" fill="#c4c4c4" /></svg>
      </footer>
    </div>
  </main>
</template>

<style>
html,
body {
  margin: 0;
  background: #000;
}
button {
  border: 0;
  margin: 0;
  padding: 0;
  background: none;
  font: inherit;
  color: inherit;
}
.glyph {
  width: 20px;
  height: 20px;
  flex: none;
  overflow: visible;
}
.tool {
  position: relative;
  display: flex;
  align-items: center;
  justify-content: center;
  flex: none;
  width: 28px;
  height: 27px;
  box-sizing: border-box;
}
.tool.drop {
  width: 13px;
}
.tool.on {
  background: linear-gradient(#ffd08c, #fda552);
  border: 1px solid #14245c;
}
.tool.labelled {
  width: auto;
  padding: 0 4px;
  gap: 4px;
}
.cap {
  white-space: nowrap;
}
.cap + .glyph {
  margin: 0 -7px 0 -7px;
}
.sep {
  flex: none;
  width: 1px;
  height: 20px;
  margin: 0 3px 0 2px;
  background: #7396d6;
  box-shadow: 1px 1px 0 #e8f1ff;
}
.combo {
  display: grid;
  flex: none;
  height: 26px;
}
.combo select,
.combo-arrow {
  grid-area: 1 / 1;
}
.combo select {
  appearance: none;
  border: 0;
  padding: 0 4px 3px;
  background: #fff;
  color: #111;
  font: inherit;
  font-size: 14px;
  outline: 0;
}
.combo-arrow {
  justify-self: end;
  display: grid;
  place-items: center;
  place-content: center;
  width: 15px;
  margin: 1px;
  background: linear-gradient(#d9e7fd, #a9c5f4);
  pointer-events: none;
}
.combo.zoom {
  width: 109px;
  margin: 0 2px;
}
.combo.font {
  width: 170px;
  margin: 0 2px;
}
.combo.points {
  width: 56px;
  margin-right: 2px;
}
.mouse {
  position: absolute;
  left: 25px;
  top: 5px;
  width: 16px;
  height: 24px;
  z-index: 2;
}
</style>

<style scoped>
.window {
  box-sizing: border-box;
  height: 100vh;
  min-height: 600px;
  margin: 0 122px;
  padding: 0 11px 8px 6px;
  display: flex;
  flex-direction: column;
  border-radius: 0 0 6px 6px;
  font: 15px/20px 'Noto Sans', 'Noto Sans CJK SC', sans-serif;
  color: #14203a;
  background:
    linear-gradient(#2a6480, #2a6480) 419px 0 / 690px 3px no-repeat,
    linear-gradient(90deg, #a9cfdd 0, #c3dde7 20%, #b7d5e2 33%, #7db8d6 37%, #86c3e0 48%, #a58fb5 50%, #8c5c92 58%, #a6a7c7 68%, #8a86ab 78%, #a284a8 88%, #b5a9c4 100%) 0 0 / 100% 31px no-repeat,
    linear-gradient(90deg, #2189a6 0, #3a9ab8 48%, #82659a 55%, #7a5590 76%, #4c8fb0 88%, #3e9cb5 100%) 0 100% / 100% 8px no-repeat,
    linear-gradient(#a9cfdd 0, #dfe6e8 25%, #2e6b95 27%, #8ab4cc 33%, #1f5f96 36%, #6fa8d5 60%, #1c5b9a 75%, #2189a6 100%) 0 0 / 6px 100% no-repeat,
    linear-gradient(#c5c0d2 0, #d5cfdf 27%, #8d77a0 28%, #9a86ad 59%, #9fc3d9 62%, #a893b4 66%, #8d7aa5 85%, #4ba6bd 100%);
}
.titlebar {
  display: flex;
  align-items: center;
  flex: none;
  height: 31px;
  padding-left: 1px;
  color: #0b1624;
}
.titlebar h1 {
  flex: 1;
  margin: 0 0 2px 5px;
  font-size: 15px;
  font-weight: 400;
  white-space: nowrap;
}
.caption-buttons {
  display: flex;
  align-self: flex-start;
  height: 20px;
  border: 1px solid #5f5f78;
  border-top: 0;
  border-radius: 0 0 5px 5px;
  overflow: hidden;
}
.caption-buttons button {
  width: 30px;
  background: linear-gradient(#d7d0de 40%, #a79bb5 50%, #c4b8ce);
  border-right: 1px solid #67617a;
}
.caption-buttons button.close {
  width: 50px;
  border: 0;
  background: linear-gradient(#eba089 40%, #cc3b1d 50%, #d9603c);
}
.caption-buttons svg {
  display: block;
  width: 18px;
  height: 14px;
  margin: 0 auto;
}
.client {
  flex: 1;
  min-height: 0;
  display: flex;
  flex-direction: column;
  border: 1px solid #4c618c;
  border-top-color: #41587e;
  background: linear-gradient(90deg, #9cbcfa, #b3cefc 50%, #c1dbff 75%);
}
.menubar {
  display: flex;
  align-items: center;
  flex: none;
  box-sizing: border-box;
  height: 35px;
  padding: 0 0 3px 7px;
}
.menubar > button {
  padding: 0 9px;
  white-space: nowrap;
}
.menubar .doc {
  width: 22px;
  height: 22px;
  margin-right: 1px;
}
.grip {
  flex: none;
  width: 3px;
  height: 18px;
  background: repeating-linear-gradient(#27458c 0 2px, transparent 2px 5px);
}
.menubar .grip {
  margin-right: 3px;
}
.ask {
  display: flex;
  width: 214px;
  height: 26px;
  margin-left: auto;
  background: #fff;
}
.ask input {
  flex: 1;
  min-width: 0;
  border: 0;
  padding: 0 3px 2px;
  background: none;
  font: inherit;
  outline: 0;
}
.ask input::placeholder {
  color: #777;
  opacity: 1;
}
.ask button {
  width: 15px;
  margin: 1px;
  display: grid;
  place-content: center;
  background: #c5dcfd;
}
.menubar > .x {
  padding: 0 7px 0 6px;
}
.x svg {
  display: block;
  width: 12px;
  height: 12px;
}
.bar {
  display: flex;
  align-items: center;
  align-self: flex-start;
  flex: none;
  height: 32px;
  margin: 0 0 1px 4px;
  padding-left: 4px;
  border-bottom: 1px solid #456db8;
  border-radius: 4px;
  background: linear-gradient(#dae9ff, #bcd4fb 50%, #86abf0);
  overflow: hidden;
}
.bar.second {
  margin-left: 154px;
}
.bar.third {
  height: 30px;
}
.more {
  position: relative;
  align-self: stretch;
  flex: none;
  width: 13px;
  margin-left: 3px;
  background: linear-gradient(#6d98e6, #0b36a0);
}
.more::after {
  content: '';
  display: block;
  width: 7px;
  margin: 20px auto 0;
  border-top: 1px solid #fff;
  height: 2px;
}
.more::before {
  content: '';
  position: absolute;
  left: 3px;
  bottom: 2px;
  border: 4px solid transparent;
  border-top-color: #fff;
  border-bottom: 0;
}
.workspace {
  flex: 1;
  min-height: 0;
  display: flex;
}
.outline {
  flex: none;
  width: 183px;
  display: flex;
  flex-direction: column;
  border-right: 11px solid #d2e6ff;
  background: #fff;
}
.tabs {
  display: flex;
  flex: none;
  height: 23px;
  align-items: flex-end;
  background: #c1dbfd;
  border-bottom: 1px solid #6f8fc9;
}
.tab {
  display: grid;
  width: 72px;
  height: 21px;
  font-family: 'Liberation Sans', 'Noto Sans CJK SC', sans-serif;
}
.tab > * {
  grid-area: 1 / 1;
}
.tab svg {
  width: 100%;
  height: 21px;
}
.tab span {
  z-index: 1;
}
.tab.chosen {
  width: 78px;
  height: 22px;
  margin: 0 0 -1px -5px;
  font-weight: 700;
  color: #000;
  z-index: 1;
}
.tabs .x {
  margin: 0 7px 6px auto;
}
.thumb-area {
  flex: 1;
  min-height: 0;
  display: flex;
}
.thumbs {
  flex: 1;
  margin: 0;
  padding: 5px 0 0 2px;
  list-style: none;
  overflow: hidden;
}
.thumbs li {
  display: flex;
  height: 110px;
}
.num {
  width: 23px;
  padding: 8px 3px 0 0;
  box-sizing: border-box;
  text-align: center;
  font: 700 13px/18px 'DejaVu Sans', sans-serif;
  color: #111;
}
.thumbs button {
  align-self: flex-start;
  padding: 4px;
}
.thumbs .current button {
  padding: 1px;
  border: 3px solid #777;
}
.thumbs button svg {
  display: block;
  width: 124px;
  height: 94px;
}
.thumbs text {
  font-family: 'Liberation Sans', 'Noto Sans CJK SC', sans-serif;
  font-weight: 700;
  fill: #0b2264;
}
.thumbs .mini path {
  fill: none;
  stroke: #a9a9a9;
}
.thumbs .mini text {
  font-size: 3px;
  font-weight: 400;
  fill: #555;
}
.vscroll {
  flex: none;
  width: 20px;
  display: flex;
  flex-direction: column;
  background: #f3f3f3;
}
.vscroll button {
  height: 19px;
}
.vscroll svg {
  display: block;
  width: 9px;
  height: 6px;
  margin: 0 auto;
}
.vscroll .handle {
  height: 84px;
  margin: 261px 1px auto;
  border: 1px solid #999;
  border-radius: 2px;
  background:
    linear-gradient(#555 0 1px, transparent 1px 4px, #555 4px 5px, transparent 5px 8px, #555 8px) center / 8px 9px no-repeat,
    linear-gradient(90deg, #fafafa, #e4e4e6 50%, #c4c5ca);
}
.vscroll .down {
  margin-bottom: 3px;
}
.vscroll .page svg {
  width: 12px;
  height: 12px;
}
.vscroll .page:last-child {
  margin-bottom: 18px;
}
.vscroll.small {
  width: 17px;
}
.vscroll.small .handle {
  height: 302px;
  margin: 0 0 auto;
}
.vscroll.idle {
  justify-content: space-between;
}
.views {
  flex: none;
  height: 20px;
  display: flex;
  background: #c4dbfb;
}
.views > button {
  width: 19px;
  box-sizing: border-box;
}
.views > .on {
  background: #fdb668;
  border: 1px solid #5d3c20;
}
.views > button svg {
  display: block;
  width: 100%;
  height: 16px;
}
.hscroll {
  flex: 1;
  display: flex;
  justify-content: space-between;
  padding: 0 6px;
  background: #f3f3f3;
}
.hscroll svg {
  display: block;
  width: 6px;
  height: 9px;
}
.editor {
  flex: 1;
  min-width: 0;
  display: flex;
  flex-direction: column;
}
.stage-row {
  flex: 1;
  min-height: 0;
  display: flex;
}
.stage {
  flex: 1;
  min-width: 0;
  padding: 16px 86px;
  background: #8590ab;
  overflow: hidden;
}
.slide {
  display: block;
  width: 100%;
  overflow: visible;
}
.slide-title {
  font: 300 40px 'Noto Sans CJK SC', sans-serif;
  fill: #052a60;
}
.uml path {
  fill: none;
  stroke: #333;
  stroke-width: 1.5px;
}
.uml text {
  font: 17px 'Liberation Sans', sans-serif;
  fill: #444;
}
.uml .name text {
  font-weight: 700;
  font-size: 16px;
  text-anchor: middle;
  fill: #2c2c2c;
}
.notes {
  flex: none;
  height: 45px;
  display: flex;
  border-top: 12px solid #d2e6ff;
  background: #fff;
}
.notes textarea {
  flex: 1;
  min-width: 0;
  border: 0;
  border-top: 1px solid #8ba6c6;
  border-left: 1px solid #8ba6c6;
  padding: 3px 3px;
  resize: none;
  outline: 0;
  background: #fff;
  font: 15px/22px 'Liberation Sans', 'Noto Sans CJK SC', sans-serif;
}
.notes textarea::placeholder {
  color: #111;
  opacity: 1;
}
.dock {
  flex: none;
  width: 32px;
  padding-top: 90px;
  background: #c1dbff;
}
.bar.upright {
  flex-direction: column;
  width: 29px;
  height: auto;
  margin: 0 0 0 1px;
  padding: 4px 0 0;
  border: 0;
  border-right: 1px solid #6a90d4;
  background: linear-gradient(90deg, #d9e8ff, #bcd4fb 50%, #8eb1f2);
}
.upright .grip {
  width: 18px;
  height: 3px;
  background: repeating-linear-gradient(90deg, #27458c 0 2px, transparent 2px 5px);
}
.upright :deep(.sep) {
  width: 20px;
  height: 1px;
  margin: 2px 0 3px;
}
.upright :deep(.glyph) {
  width: 19px;
}
.upright .more {
  width: auto;
  height: 13px;
  margin: 0;
}
.upright .more::after {
  display: none;
}
.upright .more::before {
  left: 20px;
}
.bar-row {
  flex: none;
  display: flex;
  background: #c1dbff;
}
.bar-row .bar {
  margin-bottom: 0;
  overflow: visible;
}
.status {
  flex: none;
  display: flex;
  align-items: center;
  gap: 6px;
  height: 26px;
  padding: 0 3px 0 5px;
  background: #fbfbfb;
  font: 13px/20px 'Liberation Mono', 'Noto Sans CJK SC', monospace;
  color: #111;
}
.status span {
  box-sizing: border-box;
  height: 22px;
  border: 1px solid #d9d9d9;
  background: #f3f3f3;
  text-align: center;
}
.status span:nth-child(1),
.status span:nth-child(2) {
  width: 295px;
}
.status span:nth-child(3) {
  width: 214px;
}
.status span:nth-child(4) {
  width: 37px;
}
.status svg {
  width: 12px;
  height: 12px;
  margin: 8px 0 0 auto;
}
</style>
